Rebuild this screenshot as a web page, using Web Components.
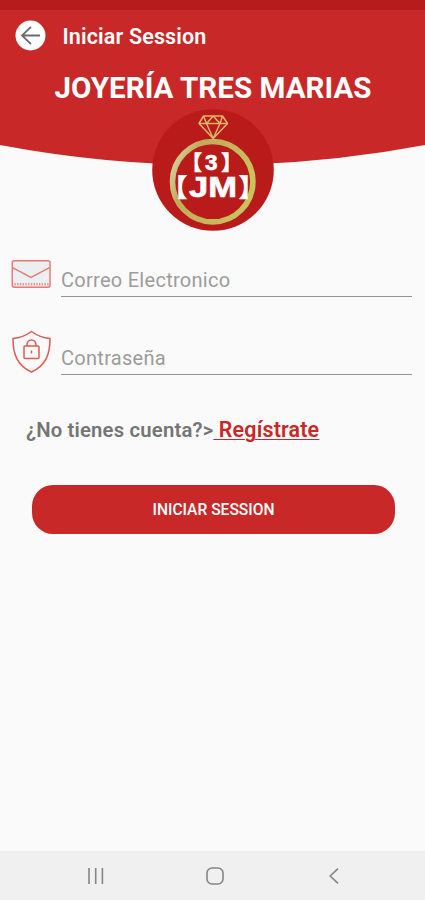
<!DOCTYPE html>
<html lang="es">
<head>
<meta charset="utf-8">
<meta name="viewport" content="width=device-width, initial-scale=1">
<title>Joyería Tres Marias</title>
<style>
    html, body {
        margin: 0;
        height: 100%;
    }

    body {
        --red: #c82828;
        --red-dark: #b71c1c;
        --bg: #fafafa;
        background: var(--bg);
        font-family: Roboto, "Liberation Sans", sans-serif;
    }
</style>
</head>
<body>
<login-screen></login-screen>

<script>
class AppHeader extends HTMLElement {
    constructor() {
        super();
        this.attachShadow({ mode: 'open' });
    }

    connectedCallback() {
        this.shadowRoot.innerHTML = `
            <style>
                :host {
                    display: block;
                    position: relative;
                    height: 231px;
                    color: #fff;
                }

                .curve {
                    position: absolute;
                    inset: 0 0 auto 0;
                    width: 100%;
                    height: 170px;
                }

                .content {
                    position: relative;
                    display: flex;
                    flex-direction: column;
                    align-items: center;
                }

                .status {
                    width: 100%;
                    height: 10px;
                    background: var(--red-dark);
                }

                .toolbar {
                    width: 100%;
                    height: 52px;
                    box-sizing: border-box;
                    padding-left: 15px;
                    display: flex;
                    align-items: center;
                    gap: 16.500px;
                }

                .toolbar svg {
                    width: 31px;
                    height: 31px;
                    margin-top: -1px;
                }

                .page {
                    margin-top: 2px;
                    font-size: 21.5px;
                    font-weight: 600;
                    line-height: 26px;
                    letter-spacing: 0.15px;
                }

                h1 {
                    margin: 9px 0 0;
                    padding-left: 1px;
                    font-size: 29.6px;
                    font-weight: 700;
                    line-height: 34px;
                    white-space: nowrap;
                }

                shop-logo {
                    margin-top: 4px;
                }
            </style>
            <svg class="curve" viewBox="0 0 425 170" preserveAspectRatio="none">
                <path d="M0 0H425V145Q212.5 185 0 145Z" fill="#c82828"/>
            </svg>
            <div class="content">
                <div class="status"></div>
                <div class="toolbar">
                    <svg viewBox="0 0 31 31" fill="none">
                        <circle cx="15.5" cy="15.5" r="15" fill="#fff"/>
                        <path d="M25 15.5H7M16 6.8L7 15.5L16 24.2" stroke="#6b6b6b" stroke-width="1.8"/>
                    </svg>
                    <span class="page"><slot name="page"></slot></span>
                </div>
                <h1><slot name="brand"></slot></h1>
                <shop-logo></shop-logo>
            </div>
        `;
    }
}

class ShopLogo extends HTMLElement {
    constructor() {
        super();
        this.attachShadow({ mode: 'open' });
    }

    connectedCallback() {
        this.shadowRoot.innerHTML = `
            <style>
                :host {
                    display: block;
                    width: 122px;
                    height: 122px;
                }

                svg {
                    display: block;
                }

                text {
                    font-family: "Liberation Sans", "Noto Sans CJK JP", sans-serif;
                    font-weight: 700;
                    fill: #fff;
                    stroke: #fff;
                    stroke-width: 0.7;
                }
            </style>
            <svg width="122" height="122" viewBox="151.5 109 122 122">
                <defs>
                    <linearGradient id="gold" x1="0" x2="1" y1="0.3" y2="0.7">
                        <stop offset="0" stop-color="#d3cd98"/>
                        <stop offset="0.2" stop-color="#c3aa5b"/>
                        <stop offset="0.65" stop-color="#c8b85a"/>
                        <stop offset="1" stop-color="#c9c45c"/>
                    </linearGradient>
                </defs>
                <circle cx="212.5" cy="170" r="60.8" fill="#b91b1b"/>
                <circle cx="212.2" cy="181.7" r="40.2" fill="none" stroke="url(#gold)" stroke-width="5.6"/>
                <g fill="none" stroke="#dfb568" stroke-width="1.5" stroke-linejoin="round">
                    <path d="M203 116H222L227 123.5L212.7 138.5L198.5 123.5Z"/>
                    <path d="M198.5 123.5H227M203 116L206 123.5L212.7 116L219.5 123.5L222 116M206 123.5L212.7 138.5L219.5 123.5"/>
                </g>
                <text x="181" y="170.2" font-size="20.5">【</text>
                <text x="204.6" y="169.8" font-size="22.5">3</text>
                <text x="220.8" y="170.2" font-size="20.5">】</text>
                <text x="161.8" y="196.7" font-size="25">【</text>
                <text x="188.5" y="196.7" font-size="29.5" textLength="48" lengthAdjust="spacingAndGlyphs">JM</text>
                <text x="238.2" y="196.7" font-size="25">】</text>
            </svg>
        `;
    }
}

class FormField extends HTMLElement {
    constructor() {
        super();
        this.attachShadow({ mode: 'open' });
    }

    connectedCallback() {
        const label = this.getAttribute('label') || '';
        const type = this.getAttribute('type') || 'text';
        this.shadowRoot.innerHTML = `
            <style>
                :host {
                    display: flex;
                    align-items: center;
                    gap: 10px;
                    height: 46px;
                    padding: 0 13px 0 11px;
                }

                .icon {
                    display: flex;
                    width: 40px;
                }

                input {
                    flex: 1;
                    min-width: 0;
                    height: 46px;
                    box-sizing: border-box;
                    padding: 12px 0 0;
                    border: 0;
                    border-bottom: 1px solid #949494;
                    border-radius: 0;
                    outline: 0;
                    background: none;
                    color: #333;
                    font: 400 20px/26px Roboto, "Liberation Sans", sans-serif;
                    letter-spacing: 0.28px;
                }

                input::placeholder {
                    color: #9c9c9c;
                    opacity: 1;
                }
            </style>
            <span class="icon"><slot></slot></span>
            <input type="${type}" placeholder="${label}" aria-label="${label}">
        `;
    }
}

class PillButton extends HTMLElement {
    constructor() {
        super();
        this.attachShadow({ mode: 'open' });
    }

    connectedCallback() {
        this.shadowRoot.innerHTML = `
            <style>
                :host {
                    display: block;
                }

                button {
                    display: block;
                    width: 100%;
                    height: 49px;
                    padding: 1px 0 0;
                    border: 0;
                    border-radius: 21px;
                    background: var(--red);
                    color: #fff;
                    font: 500 15.6px/20px Roboto, "Liberation Sans", sans-serif;
                }
            </style>
            <button type="button"><slot></slot></button>
        `;
    }
}

class NavBar extends HTMLElement {
    constructor() {
        super();
        this.attachShadow({ mode: 'open' });
    }

    connectedCallback() {
        this.shadowRoot.innerHTML = `
            <style>
                :host {
                    display: flex;
                    align-items: center;
                    justify-content: space-between;
                    height: 49px;
                    box-sizing: border-box;
                    padding: 1px 81px 0 86px;
                    background: #f0f0f0;
                }

                svg {
                    width: 20px;
                    height: 20px;
                    fill: none;
                    stroke: #858585;
                    stroke-width: 1.6;
                }
            </style>
            <svg viewBox="0 0 20 20"><path d="M3 2V18M9.7 2V18M16.4 2V18"/></svg>
            <svg viewBox="0 0 20 20"><rect x="2" y="2" width="16" height="16" rx="5"/></svg>
            <svg viewBox="0 0 20 20"><path d="M14 2.7L6.2 10L14 17.3"/></svg>
        `;
    }
}

class LoginScreen extends HTMLElement {
    constructor() {
        super();
        this.attachShadow({ mode: 'open' });
    }

    connectedCallback() {
        this.shadowRoot.innerHTML = `
            <style>
                :host {
                    display: flex;
                    flex-direction: column;
                    height: 100vh;
                    overflow: hidden;
                }

                form-field {
                    margin-top: 20px;
                }

                form-field + form-field {
                    margin-top: 32px;
                }

                .signup {
                    margin: 41px 0 0 26px;
                    font-size: 20.3px;
                    font-weight: 600;
                    line-height: 28px;
                    letter-spacing: 0.18px;
                    color: #757575;
                    white-space: pre;
                }

                .signup a {
                    color: var(--red);
                    font-size: 21.4px;
                    text-decoration: underline;
                    text-decoration-thickness: 1px;
                    text-underline-offset: 2px;
                }

                pill-button {
                    margin: 41px 30px 0 32px;
                }

                nav-bar {
                    margin-top: auto;
                }
            </style>
            <app-header>
                <span slot="page">Iniciar Session</span>
                <span slot="brand">JOYERÍA TRES MARIAS</span>
            </app-header>
            <form-field label="Correo Electronico" type="email">
                <svg width="41" height="46" viewBox="0 0 41 46" fill="none" stroke="#e57b74" stroke-width="1.5">
                    <rect x="1.3" y="9.5" width="38.7" height="27" rx="2" fill="#eceff1"/>
                    <path d="M1.5 16.5L20.5 26.5L39.5 16.5"/>
                    <path d="M3.5 33.5H39" stroke-width="2.5" stroke-dasharray="1.4 1.4" opacity="0.8"/>
                </svg>
            </form-field>
            <form-field label="Contraseña" type="password">
                <svg width="40" height="46" viewBox="0 0 40 46" fill="none" stroke="#dc5a50" stroke-width="1.5">
                    <path d="M20.5 2.5C15 6.5 8 9 2 9.5C2 25 6 36.5 20.5 43C35 36.5 39 25 39 9.5C33 9 26 6.5 20.5 2.5Z"/>
                    <rect x="13" y="17" width="15" height="12.5" rx="1"/>
                    <path d="M16 17V15.5A4.5 4.5 0 0 1 25 15.5V17M20.5 21.5V24.5"/>
                </svg>
            </form-field>
            <div class="signup">¿No tienes cuenta?&gt;<a> Regístrate</a></div>
            <pill-button>INICIAR SESSION</pill-button>
            <nav-bar></nav-bar>
        `;
    }
}

customElements.define('shop-logo', ShopLogo);
customElements.define('app-header', AppHeader);
customElements.define('form-field', FormField);
customElements.define('pill-button', PillButton);
customElements.define('nav-bar', NavBar);
customElements.define('login-screen', LoginScreen);
</script>
</body>
</html>
